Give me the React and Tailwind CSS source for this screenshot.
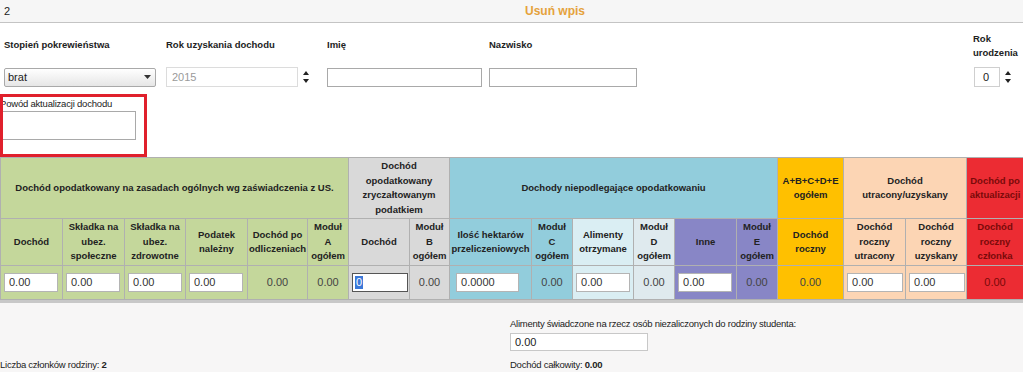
import React from 'react';

const cols = [62, 62, 61, 62, 60, 41, 61, 40, 82, 41, 61, 41, 62, 41, 66, 62, 61, 57];

const Spinner = () => (
    <svg width="8" height="16" viewBox="0 0 8 16" className="ml-[4px]">
        <path d="M4 2 L7 6 L1 6 Z" fill="#222" />
        <path d="M1 10 L7 10 L4 14 Z" fill="#222" />
    </svg>
);

const Input = ({ value, w = 'w-[54px]' }) => (
    <div className={`${w} h-[19px] bg-white border border-[#b4b4b4] flex items-center pl-[4px] text-[11px] text-[#333] font-normal`}>
        {value}
    </div>
);

const Th = ({ bg, children, colSpan, red }) => (
    <th
        colSpan={colSpan}
        className={`${bg} border border-[#b0b0b0] text-center align-middle font-bold px-[1px] whitespace-nowrap leading-[14.5px] ${red ? 'text-[#7a0a0a]' : 'text-[#222]'}`}
    >
        {children}
    </th>
);

const Td = ({ bg, children, red }) => (
    <td className={`${bg} border border-[#b0b0b0] align-middle text-center px-[4px] text-[11px] ${red ? 'text-[#7a0a0a]' : 'text-[#444]'}`}>
        {children}
    </td>
);

const InCell = ({ bg, children }) => (
    <td className={`${bg} border border-[#b0b0b0] align-middle px-[3px]`}>
        {children}
    </td>
);

export default function App() {
    return (
        <div className="w-[1023px] h-[372px] bg-white text-[9.5px] text-[#222] font-['Liberation_Sans',Arial,sans-serif] flex flex-col overflow-hidden">
            {/* pasek */}
            <div className="h-[23px] shrink-0 bg-[#f6f6f6] border-b border-[#c4c4c4] flex items-center">
                <div className="w-[87px] pl-[4px] text-[11px]">2</div>
                <div className="flex-1 text-center font-bold text-[12px] text-[#e5a23c]">Usuń wpis</div>
            </div>

            {/* etykiety */}
            <div className="h-[44px] shrink-0 flex items-center font-bold">
                <div className="w-[166px] pl-[4px]">Stopień pokrewieństwa</div>
                <div className="w-[161px]">Rok uzyskania dochodu</div>
                <div className="w-[162px]">Imię</div>
                <div className="flex-1">Nazwisko</div>
                <div className="w-[50px] leading-[14px] pt-[2px]">Rok<br />urodzenia</div>
            </div>

            {/* pola */}
            <div className="h-[20px] shrink-0 flex items-center">
                <div className="ml-[4px] w-[152px] h-[19px] border border-[#a9a9a9] rounded-[2px] bg-gradient-to-b from-white to-[#e6e6e6] flex items-center justify-between pl-[3px] pr-[4px] text-[11px]">
                    <span>brat</span>
                    <svg width="7" height="4" viewBox="0 0 7 4"><path d="M0 0 L7 0 L3.5 4 Z" fill="#333" /></svg>
                </div>
                <div className="ml-[10px] w-[132px] h-[20px] border border-[#dcdcdc] flex items-center pl-[5px] text-[11px] text-[#9a9a9a]">2015</div>
                <Spinner />
                <div className="ml-[17px] w-[155px] h-[19px] border border-[#a9a9a9]" />
                <div className="ml-[7px] w-[148px] h-[19px] border border-[#a9a9a9]" />
                <div className="ml-[337px] w-[26px] h-[20px] border border-[#cfcfcf] flex items-center pl-[8px] text-[11px]">0</div>
                <Spinner />
            </div>

            {/* powód */}
            <div className="relative mt-[7px] h-[63px] shrink-0">
                <div className="pt-[3px] leading-[14px] tracking-[-0.2px]">Powód aktualizacji dochodu</div>
                <textarea className="ml-[2px] w-[134px] h-[29px] border border-[#a9a9a9] resize-none block" />
                <div className="absolute left-0 top-0 w-[147px] h-[63px] border-[3px] border-[#e0202c]" />
            </div>

            {/* tabela */}
            <div className="shrink-0 border-b-[3px] border-[#c8c8c8]">
                <table className="table-fixed border-collapse w-[1023px]">
                    <colgroup>
                        {cols.map((w, i) => (
                            <col key={i} style={{ width: w }} />
                        ))}
                    </colgroup>
                    <tbody>
                        <tr className="h-[61px]">
                            <Th bg="bg-[#c4d79b]" colSpan={6}>Dochód opodatkowany na zasadach ogólnych wg zaświadczenia z US.</Th>
                            <Th bg="bg-[#d9d9d9]" colSpan={2}>Dochód<br />opodatkowany<br />zryczałtowanym<br />podatkiem</Th>
                            <Th bg="bg-[#92cddc]" colSpan={6}>Dochody niepodlegające opodatkowaniu</Th>
                            <Th bg="bg-[#ffc000]">A+B+C+D+E<br />ogółem</Th>
                            <Th bg="bg-[#fcd5b4]" colSpan={2}>Dochód<br />utracony/uzyskany</Th>
                            <Th bg="bg-[#ec2c33]" red>Dochód po<br />aktualizacji</Th>
                        </tr>
                        <tr className="h-[47px]">
                            <Th bg="bg-[#c4d79b]">Dochód</Th>
                            <Th bg="bg-[#c4d79b]">Składka na<br />ubez.<br />społeczne</Th>
                            <Th bg="bg-[#c4d79b]">Składka na<br />ubez.<br />zdrowotne</Th>
                            <Th bg="bg-[#c4d79b]">Podatek<br />należny</Th>
                            <Th bg="bg-[#c4d79b]">Dochód po<br />odliczeniach</Th>
                            <Th bg="bg-[#c4d79b]">Moduł<br />A<br />ogółem</Th>
                            <Th bg="bg-[#d9d9d9]">Dochód</Th>
                            <Th bg="bg-[#d9d9d9]">Moduł<br />B<br />ogółem</Th>
                            <Th bg="bg-[#92cddc]">Ilość hektarów<br />przeliczeniowych</Th>
                            <Th bg="bg-[#92cddc]">Moduł<br />C<br />ogółem</Th>
                            <Th bg="bg-[#daeef3]">Alimenty<br />otrzymane</Th>
                            <Th bg="bg-[#dfeaee]">Moduł<br />D<br />ogółem</Th>
                            <Th bg="bg-[#8886c6]">Inne</Th>
                            <Th bg="bg-[#8886c6]">Moduł<br />E<br />ogółem</Th>
                            <Th bg="bg-[#ffc000]">Dochód<br />roczny</Th>
                            <Th bg="bg-[#fcd5b4]">Dochód<br />roczny<br />utracony</Th>
                            <Th bg="bg-[#fcd5b4]">Dochód<br />roczny<br />uzyskany</Th>
                            <Th bg="bg-[#ec2c33]" red>Dochód<br />roczny<br />członka</Th>
                        </tr>
                        <tr className="h-[34px]">
                            <InCell bg="bg-[#c4d79b]"><Input value="0.00" /></InCell>
                            <InCell bg="bg-[#c4d79b]"><Input value="0.00" /></InCell>
                            <InCell bg="bg-[#c4d79b]"><Input value="0.00" /></InCell>
                            <InCell bg="bg-[#c4d79b]"><Input value="0.00" /></InCell>
                            <Td bg="bg-[#c4d79b]">0.00</Td>
                            <Td bg="bg-[#c4d79b]">0.00</Td>
                            <InCell bg="bg-[#d9d9d9]">
                                <div className="w-[56px] h-[19px] bg-white border border-[#555] flex items-center pl-[2px] text-[11px]">
                                    <span className="bg-[#3b78d8] text-white px-[1px] leading-[13px]">0</span>
                                </div>
                            </InCell>
                            <Td bg="bg-[#d9d9d9]">0.00</Td>
                            <InCell bg="bg-[#92cddc]"><div className="pl-[3px]"><Input value="0.0000" w="w-[63px]" /></div></InCell>
                            <Td bg="bg-[#92cddc]">0.00</Td>
                            <InCell bg="bg-[#daeef3]"><Input value="0.00" /></InCell>
                            <Td bg="bg-[#dfeaee]">0.00</Td>
                            <InCell bg="bg-[#8886c6]"><Input value="0.00" /></InCell>
                            <Td bg="bg-[#8886c6]">0.00</Td>
                            <Td bg="bg-[#ffc000]">0.00</Td>
                            <InCell bg="bg-[#fcd5b4]"><Input value="0.00" w="w-[56px]" /></InCell>
                            <InCell bg="bg-[#fcd5b4]"><Input value="0.00" w="w-[56px]" /></InCell>
                            <Td bg="bg-[#ec2c33]" red>0.00</Td>
                        </tr>
                    </tbody>
                </table>
            </div>

            {/* podsumowanie */}
            <div className="flex-1 bg-[#f7f6f6] flex tracking-[-0.25px]">
                <div className="w-[510px] flex flex-col justify-end">
                    <div className="leading-[14px]">Liczba członków rodziny: <b>2</b></div>
                </div>
                <div className="pt-[14px] flex flex-col">
                    <div className="leading-[14px]">Alimenty świadczone na rzecz osób niezaliczonych do rodziny studenta:</div>
                    <div className="mt-[2px] w-[138px] h-[18px] bg-white border border-[#c8c8c8] flex items-center pl-[4px] text-[11px] tracking-normal">0.00</div>
                    <div className="mt-[7px] leading-[14px]">Dochód całkowity: <b>0.00</b></div>
                </div>
            </div>
        </div>
    );
}
